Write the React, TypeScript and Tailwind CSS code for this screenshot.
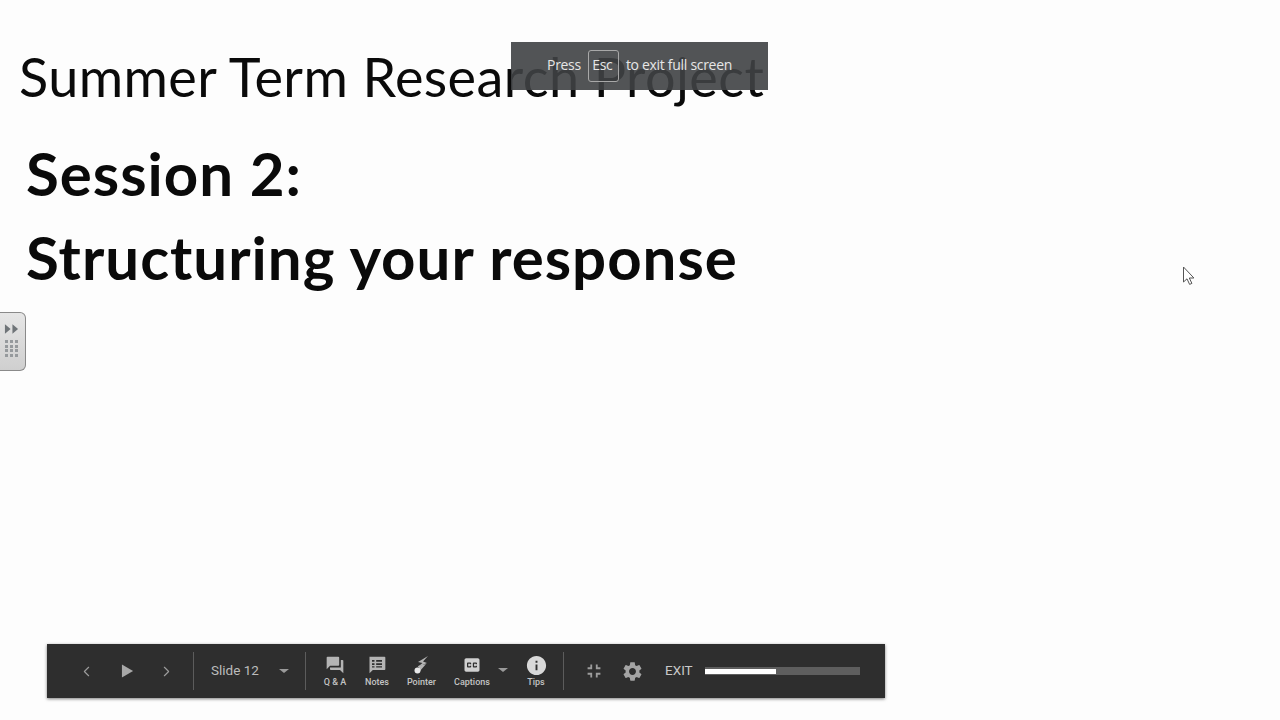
import { ChevronLeft, ChevronRight } from "lucide-react";

const uiFont = "font-['Roboto',sans-serif]";

function ToolButton({ label, width, children }: { label: string; width: string; children: React.ReactNode }) {
  return (
    <div className={`flex flex-col items-center ${width}`}>
      <div className="h-[22px] flex items-center justify-center">{children}</div>
      <span className={`text-[9px] leading-[12px] font-medium text-[#c4c4c4] whitespace-nowrap ${uiFont}`}>{label}</span>
    </div>
  );
}

function Caret() {
  return <div className="w-0 h-0 border-x-[5px] border-x-transparent border-t-[4px] border-t-[#9a9a9a]" />;
}

function Divider() {
  return <div className="w-px h-[38px] bg-[#5c5c5c]" />;
}

function Icon({ d, size = 20, color = "#b4b4b4" }: { d: string; size?: number; color?: string }) {
  return (
    <svg width={size} height={size} viewBox="0 0 24 24" fill={color}>
      <path d={d} />
    </svg>
  );
}

export default function App() {
  return (
    <div className="relative w-full h-screen overflow-hidden bg-[#fdfdfd]">
      <div className="pt-[47px] font-['Lato',sans-serif] text-[#0a0a0a]">
        <h1 className="pl-[19px] text-[54px] leading-[60px] font-normal tracking-[0.4px]">Summer Term Research Project</h1>
        <div className="pl-[26px] pt-[24px] text-[60px] leading-[84px] font-bold tracking-[1px]">
          <p>Session 2:</p>
          <p>Structuring your response</p>
        </div>
      </div>

      {/* full screen notice */}
      <div className="absolute left-[511px] top-[42px] w-[257px] h-[48px] bg-[#3f4144]/90 flex items-center justify-center gap-[7px] text-[14px] text-[#e6e6e6] font-['Open_Sans',sans-serif] tracking-[-0.3px]">
        <span className="-mt-[3px]">Press</span>
        <span className="border border-[#a8a8a8] rounded-[3px] w-[31px] h-[32px] flex items-center justify-center -mt-[1px] pb-[2px] pr-[2px]">Esc</span>
        <span className="-mt-[3px]">to exit full screen</span>
      </div>

      {/* side tab */}
      <div className="absolute left-0 top-[312px] w-[26px] h-[59px] bg-gradient-to-b from-[#e6e6e6] to-[#cfcfcf] border border-[#8a8a8a] border-l-0 rounded-r-[6px] flex flex-col items-center pt-[11px] pr-[2px] gap-[6px]">
        <svg width="15" height="10" viewBox="0 0 16 10" fill="#6f7478">
          <path d="M1 0l6 5-6 5zM9 0l6 5-6 5z" />
        </svg>
        <div className="grid grid-cols-3 gap-[1.5px]">
          {Array.from({ length: 12 }).map((_, i) => (
            <div key={i} className="w-[3.5px] h-[3px] bg-[#969a9d]" />
          ))}
        </div>
      </div>

      {/* mouse pointer */}
      <svg className="absolute left-[1182px] top-[266px]" width="14" height="20" viewBox="0 0 14 20" fill="#fff" stroke="#555" strokeWidth="1">
        <path d="M1.500 1v15l3.500-3.200 2.600 5.600 2.300-1-2.600-5.400h4.600z" />
      </svg>

      {/* player toolbar */}
      <div className={`absolute left-[47px] top-[644px] w-[838px] h-[54px] bg-[#2e2e2e] shadow-[0_1px_3px_rgba(0,0,0,0.5)] flex items-center ${uiFont}`}>
        <div className="w-[146px] flex items-center justify-between pl-[31px] pr-[18px]">
          <ChevronLeft size={17} strokeWidth={1.6} color="#9c9c9c" />
          <svg className="ml-[1px]" width="13" height="14" viewBox="0 0 14 14" fill="#a8a8a8">
            <path d="M1 0l12 7-12 7z" />
          </svg>
          <ChevronRight size={17} strokeWidth={1.6} color="#9c9c9c" />
        </div>
        <Divider />
        <div className="w-[111px] flex items-center pl-[17px]">
          <span className="text-[13.5px] leading-[16px] -mt-[2px] text-[#bcbcbc] w-[68px]">Slide 12</span>
          <Caret />
        </div>
        <Divider />
        <div className="flex items-center pl-[8px]">
          <ToolButton label="Q & A" width="w-[42px]">
            <Icon d="M21 6h-2v9H6v2c0 .55.45 1 1 1h11l4 4V7c0-.55-.45-1-1-1zm-4 6V3c0-.55-.45-1-1-1H3c-.55 0-1 .45-1 1v14l4-4h10c.55 0 1-.45 1-1z" />
          </ToolButton>
          <ToolButton label="Notes" width="w-[42px]">
            <Icon d="M3 2h18c.55 0 1 .45 1 1v14c0 .55-.45 1-1 1H7l-4 4V3c0-.55 0-1 0-1zm3 4v2h3V6zm0 4v2h3v-2zm5-4v2h7V6zm0 4v2h7v-2zm-5 3.500V15h3v-1.500zm5 0V15h7v-1.500z" />
          </ToolButton>
          <ToolButton label="Pointer" width="w-[47px]">
            <svg width="20" height="20" viewBox="0 0 20 20" fill="#b4b4b4">
              <path d="M16 1L6 7l4.500 1L5 12.500 15 8l-4-1.500z" />
              <path d="M6 11l8-2-6 7z" />
              <circle cx="5.500" cy="15.500" r="3" fill="#e8e8e8" />
            </svg>
          </ToolButton>
          <ToolButton label="Captions" width="w-[54px]">
            <Icon color="#d0d0d0" d="M19 4H5c-1.100 0-2 .9-2 2v12c0 1.100.9 2 2 2h14c1.100 0 2-.9 2-2V6c0-1.100-.9-2-2-2zm-8 7H9.500v-.5h-2v3h2V13H11v1c0 .55-.45 1-1 1H7c-.55 0-1-.45-1-1v-4c0-.55.45-1 1-1h3c.55 0 1 .45 1 1v1zm7 0h-1.500v-.5h-2v3h2V13H18v1c0 .55-.45 1-1 1h-3c-.55 0-1-.45-1-1v-4c0-.55.45-1 1-1h3c.55 0 1 .45 1 1v1z" />
          </ToolButton>
          <div className="w-[8px] mb-[2px] flex justify-center"><Caret /></div>
          <ToolButton label="Tips" width="w-[54px] ml-[2px]">
            <Icon size={23} color="#d8d8d8" d="M12 2C6.480 2 2 6.480 2 12s4.480 10 10 10 10-4.480 10-10S17.520 2 12 2zm1 15h-2v-6h2v6zm0-8h-2V7h2v2z" />
          </ToolButton>
        </div>
        <Divider />
        <div className="flex items-center pl-[19px]">
          <Icon size={22} color="#9c9c9c" d="M5 16h3v3h2v-5H5v2zm3-8H5v2h5V5H8v3zm6 11h2v-3h3v-2h-5v5zm2-11V5h-2v5h5V8h-3z" />
          <div className="ml-[16px]">
            <Icon size={23} color="#a4a4a4" d="M19.140 12.940c.04-.3.06-.61.06-.94 0-.32-.02-.64-.07-.94l2.030-1.580c.18-.14.23-.41.12-.61l-1.920-3.320c-.12-.22-.37-.29-.59-.22l-2.390.96c-.5-.38-1.030-.7-1.620-.94l-.36-2.540c-.04-.24-.24-.41-.48-.41h-3.840c-.24 0-.43.17-.47.41l-.36 2.540c-.59.24-1.130.57-1.620.94l-2.390-.96c-.22-.08-.47 0-.59.22L2.740 8.870c-.12.21-.08.47.12.61l2.030 1.580c-.05.3-.09.63-.09.94s.02.64.07.94l-2.030 1.580c-.18.14-.23.41-.12.61l1.920 3.320c.12.22.37.29.59.22l2.390-.96c.5.38 1.030.7 1.620.94l.36 2.540c.05.24.24.41.48.41h3.840c.24 0 .44-.17.47-.41l.36-2.540c.59-.24 1.130-.56 1.620-.94l2.390.96c.22.08.47 0 .59-.22l1.920-3.320c.12-.22.07-.47-.12-.61l-2.010-1.580zM12 15.600c-1.980 0-3.600-1.620-3.600-3.600s1.620-3.600 3.600-3.600 3.600 1.620 3.600 3.600-1.620 3.600-3.600 3.600z" />
          </div>
          <span className="ml-[21px] text-[13.5px] leading-[16px] -mt-[2px] text-[#c8c8c8]">EXIT</span>
          <div className="ml-[12px] w-[155px] h-[8px] bg-[#5e5e5e]">
            <div className="w-[71px] h-[5px] mt-[1px] bg-white translate-y-[1px]" />
          </div>
        </div>
      </div>
    </div>
  );
}
